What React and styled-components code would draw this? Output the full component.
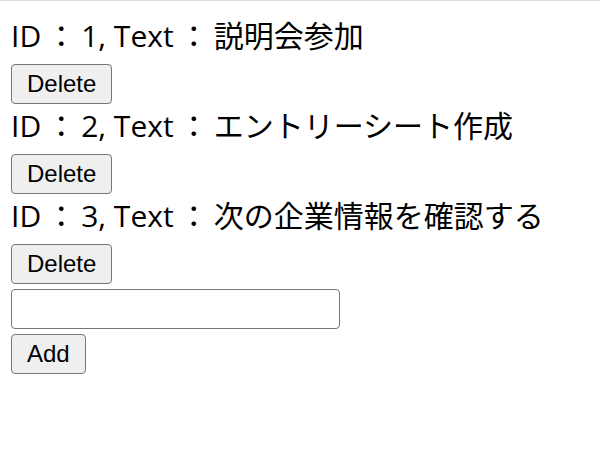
import React, { useState } from 'react'
import styled, { createGlobalStyle } from 'styled-components'

const GlobalStyle = createGlobalStyle`
    html, body {
        margin: 0;
        padding: 0;
        background: #ffffff;
    }
    body {
        border-top: 1px solid #dedede;
        font-family: "Liberation Sans", Arial, sans-serif;
        color: #000000;
    }
`

const Page = styled.div`
    padding: 13px 0 0 11px;
`

const TodoItem = styled.div`
    display: flex;
    flex-direction: column;
    align-items: flex-start;
`

const TodoText = styled.div`
    height: 50px;
    line-height: 41px;
    font-family: "Open Sans", "Noto Sans CJK JP", sans-serif;
    font-size: 30px;
    white-space: nowrap;
    text-spacing-trim: space-all;
`

const Colon = styled.span`
    display: inline-block;
    width: 30px;
    text-align: center;
    margin: 0 5px;
    font-family: "Noto Sans CJK JP", sans-serif;
`

const Button = styled.button`
    box-sizing: border-box;
    height: 40px;
    padding: 0 15px;
    font-family: "Liberation Sans", Arial, sans-serif;
    font-size: 24px;
    color: #000000;
    background: #efefef;
    border: 1px solid #767676;
    border-radius: 4px;
    cursor: pointer;
`

const AddForm = styled.div`
    display: flex;
    flex-direction: column;
    align-items: flex-start;
    gap: 5px;
    margin-top: 5px;
`

const TextInput = styled.input`
    box-sizing: border-box;
    width: 329px;
    height: 40px;
    padding: 2px 4px;
    font-size: 24px;
    border: 1px solid #767676;
    border-radius: 4px;
    background: #ffffff;
`

const initialTodos = [
    { id: 1, text: '説明会参加' },
    { id: 2, text: 'エントリーシート作成' },
    { id: 3, text: '次の企業情報を確認する' },
]

export default function App() {
    const [todos, setTodos] = useState(initialTodos)
    const [value, setValue] = useState('')

    const addTodo = () => {
        if (!value) return
        const nextId = todos.length ? todos[todos.length - 1].id + 1 : 1
        setTodos([...todos, { id: nextId, text: value }])
        setValue('')
    }

    return (
        <Page lang="ja">
            <GlobalStyle />
            {todos.map((todo) => (
                <TodoItem key={todo.id}>
                    <TodoText>
                        ID<Colon>：</Colon>{todo.id}, Text<Colon>：</Colon>{todo.text}
                    </TodoText>
                    <Button onClick={() => setTodos(todos.filter((t) => t.id !== todo.id))}>
                        Delete
                    </Button>
                </TodoItem>
            ))}
            <AddForm>
                <TextInput value={value} onChange={(e) => setValue(e.target.value)} />
                <Button onClick={addTodo}>Add</Button>
            </AddForm>
        </Page>
    )
}
